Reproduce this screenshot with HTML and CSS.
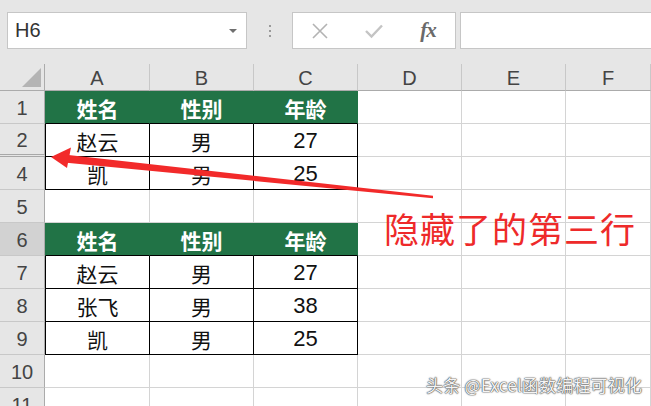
FILE: index.html
```html
<!DOCTYPE html>
<html lang="zh">
<head>
<meta charset="utf-8">
<title>Excel</title>
<link rel="stylesheet" href="styles.css">
</head>
<body>
<div class="app">
  <div class="toolbar">
    <div class="namebox"><span class="nb-text">H6</span><span class="nb-arrow"></span></div>
    <div class="dots"><i></i><i></i><i></i></div>
    <div class="fbtns">
      <span class="fb"><svg width="18" height="18" viewBox="0 0 18 18"><path d="M2 2 L16 16 M16 2 L2 16" stroke="#b3b3b3" stroke-width="1.6" fill="none"/></svg></span>
      <span class="fb"><svg width="20" height="16" viewBox="0 0 20 16"><path d="M2 8 L7.5 13.5 L18 2.5" stroke="#c4c4c4" stroke-width="2.4" fill="none"/></svg></span>
      <span class="fb fx">fx</span>
    </div>
    <div class="finput"></div>
  </div>
  <div class="sheet">
    <div class="ch corner"><span class="tri"></span></div>
    <div class="ch">A</div><div class="ch">B</div><div class="ch">C</div><div class="ch">D</div><div class="ch">E</div><div class="ch">F</div>

    <div class="rh">1</div>
    <div class="c th first">姓名</div><div class="c th">性别</div><div class="c th">年龄</div><div class="c"></div><div class="c"></div><div class="c"></div>

    <div class="rh hid">2</div>
    <div class="c td first">赵云</div><div class="c td">男</div><div class="c td num">27</div><div class="c"></div><div class="c"></div><div class="c"></div>

    <div class="rh">4</div>
    <div class="c td first">凯</div><div class="c td">男</div><div class="c td num">25</div><div class="c"></div><div class="c"></div><div class="c"></div>

    <div class="rh">5</div>
    <div class="c"></div><div class="c"></div><div class="c"></div><div class="c"></div><div class="c"></div><div class="c"></div>

    <div class="rh sel">6</div>
    <div class="c th first">姓名</div><div class="c th">性别</div><div class="c th">年龄</div><div class="c"></div><div class="c"></div><div class="c"></div>

    <div class="rh">7</div>
    <div class="c td first">赵云</div><div class="c td">男</div><div class="c td num">27</div><div class="c"></div><div class="c"></div><div class="c"></div>

    <div class="rh">8</div>
    <div class="c td first">张飞</div><div class="c td">男</div><div class="c td num">38</div><div class="c"></div><div class="c"></div><div class="c"></div>

    <div class="rh">9</div>
    <div class="c td first">凯</div><div class="c td">男</div><div class="c td num">25</div><div class="c"></div><div class="c"></div><div class="c"></div>

    <div class="rh">10</div>
    <div class="c"></div><div class="c"></div><div class="c"></div><div class="c"></div><div class="c"></div><div class="c"></div>

    <div class="rh">11</div>
    <div class="c"></div><div class="c"></div><div class="c"></div><div class="c"></div><div class="c"></div><div class="c"></div>
  </div>

  <svg class="arrow" width="651" height="406" viewBox="0 0 651 406">
    <polygon points="64,154.5 433,195.8 433,198.2 64,162.5" fill="#f22a2a"/>
    <polygon points="51,157 71,147.5 67,168" fill="#f22a2a"/>
  </svg>
  <div class="note">隐藏了的第三行</div>
  <div class="wm">头条 @Excel函数编程可视化</div>
</div>
</body>
</html>
```

FILE: styles.css
```css
* { box-sizing: border-box; }
html, body { margin: 0; padding: 0; }
body {
  width: 651px;
  height: 406px;
  overflow: hidden;
  background: #e6e6e6;
  font-family: "Liberation Sans", "Noto Sans CJK SC", sans-serif;
}
.app {
  position: relative;
  width: 651px;
  height: 406px;
  overflow: hidden;
}
.toolbar {
  height: 64px;
  padding-top: 12px;
  display: flex;
  align-items: flex-start;
}
.namebox {
  margin-left: 7px;
  width: 240px;
  height: 37px;
  background: #fff;
  border: 1px solid #c6c6c6;
  display: flex;
  align-items: center;
  justify-content: space-between;
  padding: 0 9px 0 7px;
}
.nb-text {
  font-size: 20px;
  color: #333;
  font-family: "Liberation Sans", sans-serif;
}
.nb-arrow {
  width: 0;
  height: 0;
  border-left: 4px solid transparent;
  border-right: 4px solid transparent;
  border-top: 4px solid #6f6f6f;
}
.dots {
  width: 45px;
  height: 37px;
  display: flex;
  flex-direction: column;
  align-items: center;
  justify-content: center;
  gap: 3px;
}
.dots i {
  display: block;
  width: 2px;
  height: 2px;
  background: #9a9a9a;
}
.fbtns {
  width: 164px;
  height: 37px;
  background: #fff;
  border: 1px solid #c6c6c6;
  display: flex;
  align-items: center;
}
.fb {
  width: 54px;
  display: flex;
  justify-content: center;
  align-items: center;
}
.fx {
  font-family: "Liberation Serif", serif;
  font-style: italic;
  font-size: 21px;
  color: #6a6a6a;
  font-weight: bold;
  letter-spacing: -1px;
}
.finput {
  margin-left: 4px;
  flex: 1;
  height: 37px;
  background: #fff;
  border: 1px solid #c6c6c6;
  border-right: none;
}
.sheet {
  display: grid;
  grid-template-columns: 45px 105px 104px 104px 104px 104px 85px;
  grid-template-rows: 27px repeat(10, 33px);
  background: #fff;
}
.ch {
  background: #e6e6e6;
  border-right: 1px solid #c8c8c8;
  border-bottom: 1px solid #ababab;
  display: flex;
  align-items: center;
  justify-content: center;
  font-size: 20px;
  color: #444;
  padding-top: 2px;
}
.corner {
  position: relative;
  border-right: 1px solid #ababab;
}
.tri {
  position: absolute;
  right: 3px;
  bottom: 3px;
  width: 0;
  height: 0;
  border-left: 19px solid transparent;
  border-bottom: 19px solid #b4b4b4;
}
.rh {
  background: #e6e6e6;
  border-right: 1px solid #ababab;
  border-bottom: 1px solid #c8c8c8;
  display: flex;
  align-items: center;
  justify-content: center;
  font-size: 20px;
  color: #444;
  padding-top: 2px;
}
.rh.hid { border-bottom: 3px double #a8a8a8; }
.rh.sel { background: #d2d2d2; }
.c {
  border-right: 1px solid #d4d4d4;
  border-bottom: 1px solid #d4d4d4;
  display: flex;
  align-items: center;
  justify-content: center;
  font-size: 21px;
  color: #111;
  padding-top: 1px;
}
.num { font-size: 22px; }
.th {
  background: #217346;
  color: #fff;
  font-weight: bold;
  border-right-color: #217346;
  border-bottom: 1px solid #000;
}
.td {
  border-right: 1px solid #000;
  border-bottom: 1px solid #000;
}
.first { border-left: 1px solid #000; }
.th.first { border-left-color: #217346; }
.arrow {
  position: absolute;
  left: 0;
  top: 0;
  pointer-events: none;
}
.note {
  position: absolute;
  left: 384px;
  top: 210px;
  font-family: "Noto Sans CJK SC", sans-serif;
  font-size: 35px;
  line-height: 35px;
  letter-spacing: 1px;
  color: #ee2a2a;
  white-space: nowrap;
}
.wm {
  position: absolute;
  left: 426px;
  top: 375px;
  font-family: "Noto Sans CJK SC", sans-serif;
  font-size: 17px;
  line-height: 19px;
  letter-spacing: 0.2px;
  color: #f4f4f4;
  white-space: nowrap;
  text-shadow: 0 0 1px #444, 0 0 1px #444, 0 0 2px #777;
}
```
